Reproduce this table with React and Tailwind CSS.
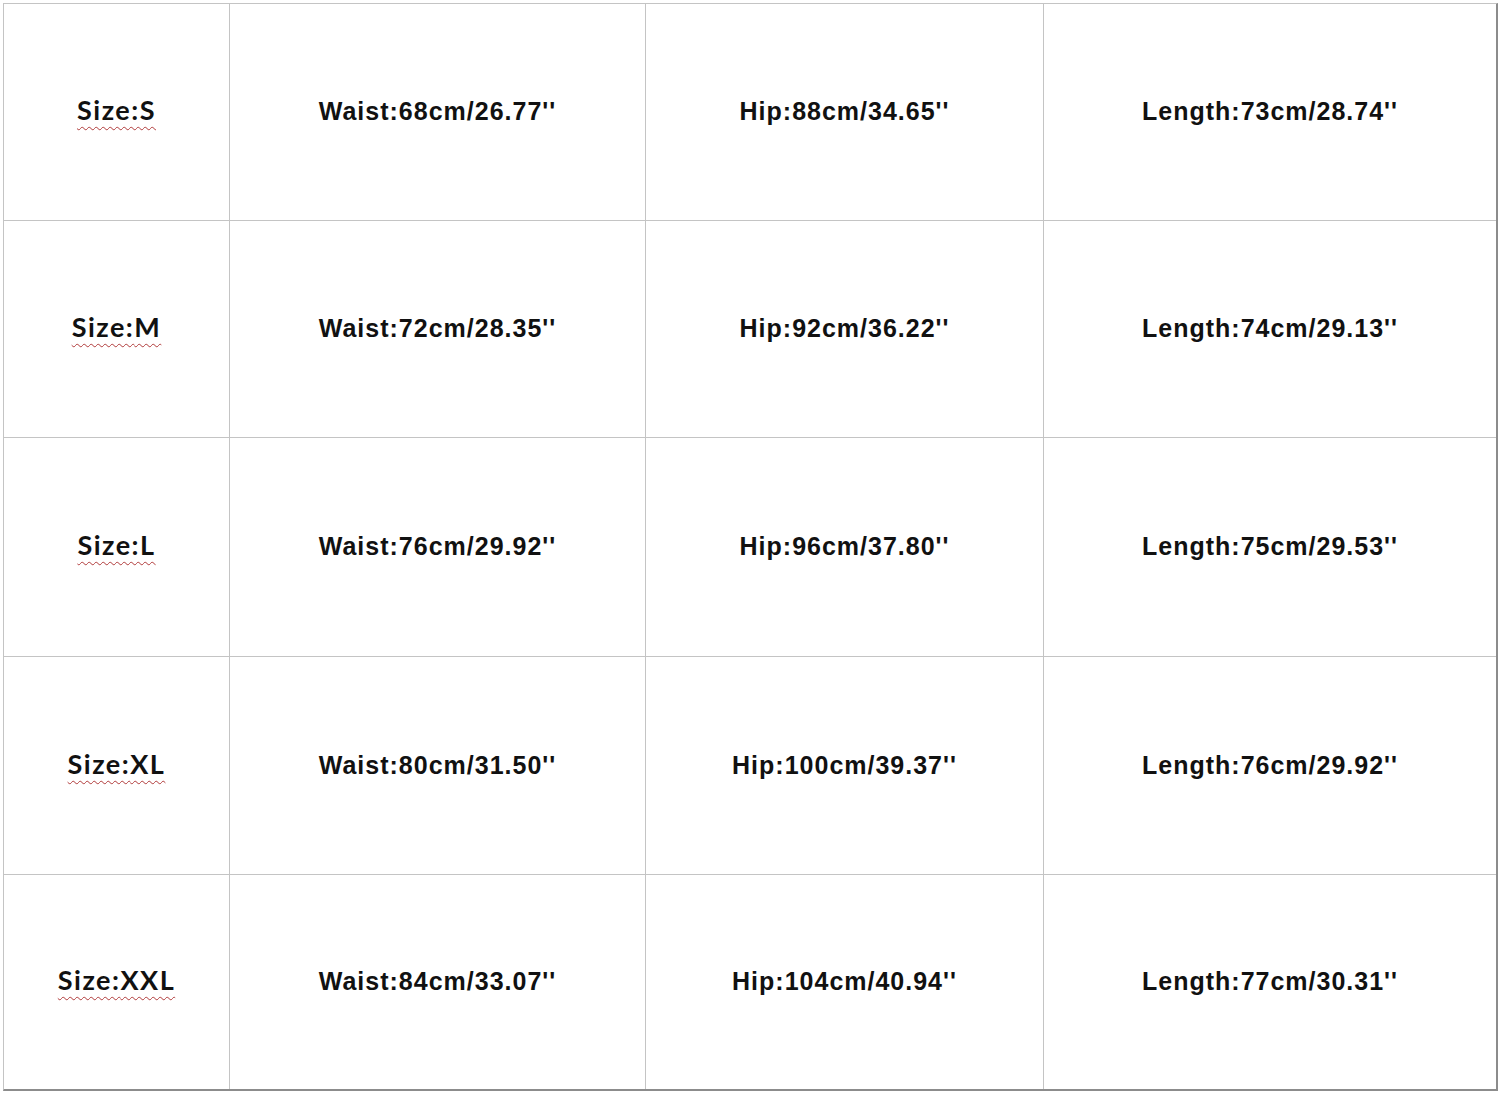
import React from "react";

const rows = [
  ["S", "68cm/26.77", "88cm/34.65", "73cm/28.74"],
  ["M", "72cm/28.35", "92cm/36.22", "74cm/29.13"],
  ["L", "76cm/29.92", "96cm/37.80", "75cm/29.53"],
  ["XL", "80cm/31.50", "100cm/39.37", "76cm/29.92"],
  ["XXL", "84cm/33.07", "104cm/40.94", "77cm/30.31"],
];

const heights = ["h-[217px]", "h-[217px]", "h-[219px]", "h-[218px]", "h-[214px]"];

export default function App() {
  return (
    <div className="w-[1500px] h-[1093px] bg-white pt-[3px] pl-[3px]">
      <div className="w-[1495px] border-l border-t border-[#c4c4c4] border-r-2 border-r-[#8c8c8c] border-b-2 border-b-[#8c8c8c] font-['Liberation_Sans',Arial,sans-serif] font-bold text-[25px] tracking-[1px] text-[#111]">
        {rows.map((r, i) => (
          <div key={r[0]} className={`grid grid-cols-[226px_416px_398px_1fr] ${heights[i]} ${i < rows.length - 1 ? "border-b border-[#c4c4c4]" : ""}`}>
            <div className="flex items-center justify-center border-r border-[#c4c4c4] pb-[3px]">
              <span className="font-['Lato',sans-serif] text-[27px] tracking-[1.5px] underline decoration-wavy decoration-[#b03a3a] decoration-1 underline-offset-[6px]">
                Size:{r[0]}
              </span>
            </div>
            <div className="flex items-center justify-center border-r border-[#c4c4c4]">
              Waist:{r[1]}''
            </div>
            <div className="flex items-center justify-center border-r border-[#c4c4c4]">
              Hip:{r[2]}''
            </div>
            <div className="flex items-center justify-center">
              Length:{r[3]}''
            </div>
          </div>
        ))}
      </div>
    </div>
  );
}
